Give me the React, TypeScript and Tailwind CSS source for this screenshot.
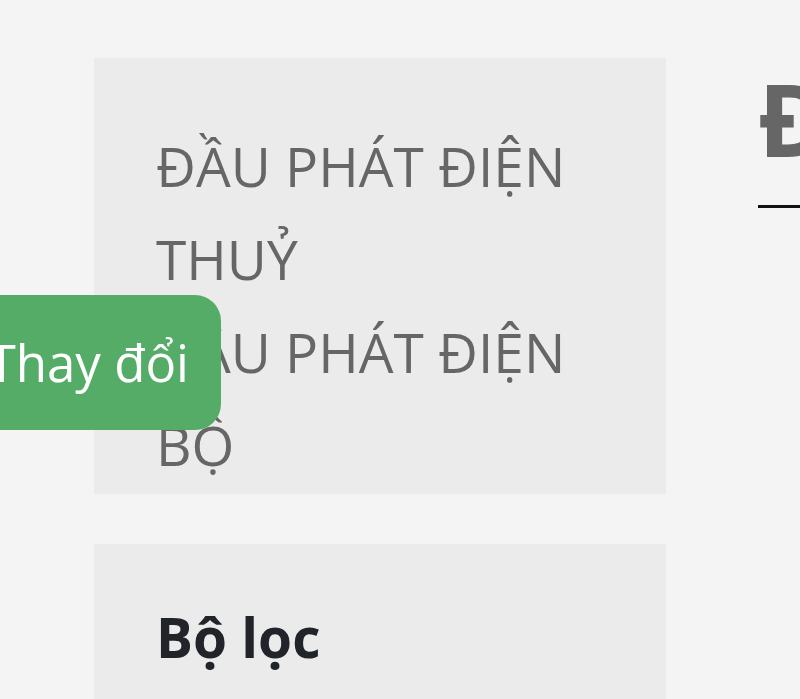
export default function App() {
  return (
    <div className="relative h-[699px] w-[800px] overflow-hidden bg-[#f4f4f4] font-['Open_Sans',sans-serif]">
      <div className="flex gap-[92px] pl-[94px] pt-[58px]">
        {/* Sidebar */}
        <div className="flex w-[572px] shrink-0 flex-col gap-[50px]">
          <div className="bg-[#ebebeb] pb-[3px] pl-[62px] pr-[62px] pt-[61px]">
            <ul className="text-[55px] leading-[93px] text-[#666666]">
              <li>ĐẦU PHÁT ĐIỆN THUỶ</li>
              <li>ĐẦU PHÁT ĐIỆN BỘ</li>
            </ul>
          </div>
          <div className="h-[200px] bg-[#ebebeb] px-[62px] pt-[60px]">
            <h3 className="text-[55px] font-bold leading-[66px] text-[#212529]">Bộ lọc</h3>
          </div>
        </div>

        {/* Main content */}
        <div className="shrink-0">
          <h1 className="whitespace-nowrap text-[100px] font-bold leading-[120px] text-[#666666]">
            ĐẦU PHÁT ĐIỆN THUỶ
          </h1>
          <div className="mt-[27px] h-[3px] w-[120px] bg-[#111111]" />
        </div>
      </div>

      {/* Floating button */}
      <button className="absolute left-0 top-[295px] flex h-[135px] w-[221px] items-center justify-end rounded-r-[26px] bg-[#55ac67] pr-[32px] text-[51px] text-white">
        <span className="whitespace-nowrap">Thay đổi</span>
      </button>
    </div>
  );
}
